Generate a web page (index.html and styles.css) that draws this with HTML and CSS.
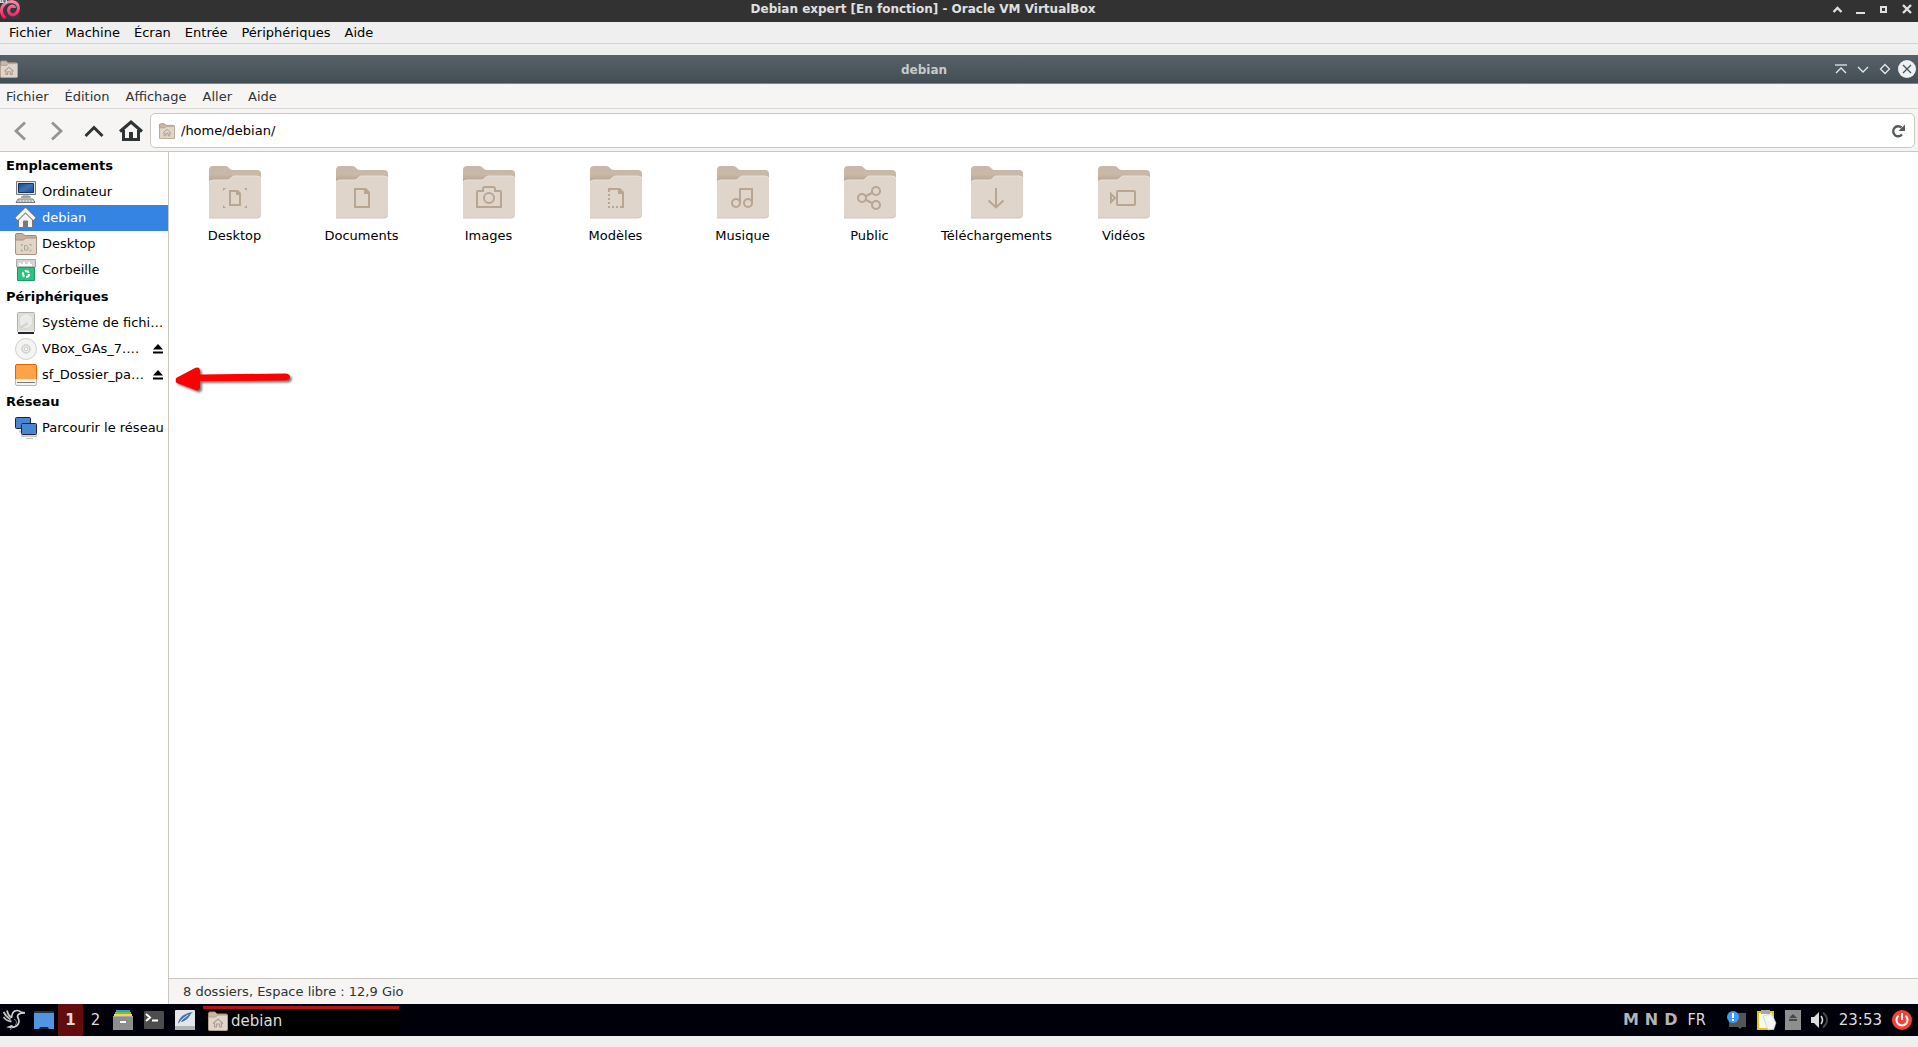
FILE: index.html
```html
<!DOCTYPE html>
<html lang="fr">
<head>
<meta charset="utf-8">
<title>Debian expert [En fonction] - Oracle VM VirtualBox</title>
<link rel="stylesheet" href="styles.css">
</head>
<body>
<svg class="defs" aria-hidden="true">
  <defs>
    <linearGradient id="backshade" x1="0" y1="0" x2="0" y2="1">
      <stop offset="0" stop-color="#c9b7a7"/><stop offset=".16" stop-color="#c9b7a7"/><stop offset=".28" stop-color="#b9a593"/>
    </linearGradient>
    <linearGradient id="swirl" x1="0" y1="0" x2="0" y2="1">
      <stop offset="0" stop-color="#f58ba0"/><stop offset="1" stop-color="#ff0f57"/>
    </linearGradient>
    <linearGradient id="screen" x1="0" y1="0" x2="1" y2="1">
      <stop offset="0" stop-color="#174a8c"/><stop offset=".5" stop-color="#3d74b8"/><stop offset="1" stop-color="#1a4b8f"/>
    </linearGradient>
    <symbol id="folder" viewBox="0 0 52 53">
      <path d="M0 53V4q0-4 4-4h12q2 0 3 1l2 2q1 1 3 1h24q4 0 4 4v40H0z" fill="url(#backshade)"/>
      <path d="M0 52V18q0-4 4-4h14q2 0 3-1l2-2q1-1 3-1h22q4 0 4 4v34q0 4-4 4z" fill="#dfd5cb"/>
      <path d="M0 17q0-3 4-3h14q2 0 3-1l2-2q1-1 3-1h22q4 0 4 3" fill="none" stroke="#e9e1d9"/>
      <path d="M0 52h48q3 0 4-3" fill="none" stroke="#cdc5bd"/>
    </symbol>
    <symbol id="homefolder" viewBox="0 0 20 20">
      <path d="M.5 19V2.500q0-1.500 1.500-1.500h5l2 2h9q1.500 0 1.500 1.500V19z" fill="#c9b7a7" stroke="#a4907e"/>
      <path d="M.5 7q0-1 1-1h6l2-2h9q1 0 1 1v13q0 1.500-1.500 1.500h-16Q.5 19.500.5 18z" fill="#dfd5cb" stroke="#b39f8d"/>
      <path d="M5 12.500l5-4.500 5 4.500M6.500 12v4h2v-3h3v3h2v-4" fill="none" stroke="#b39f8d" stroke-width="1.200"/>
    </symbol>
    <symbol id="eject" viewBox="0 0 10 10"><path d="M5 0L10 5.500H0zM0 7.500h10v2H0z" fill="#000"/></symbol>
  </defs>
</svg>

<header class="host-title">
  <svg class="host-logo" viewBox="0 0 20 20"><path d="M1 0h19v19H1z" fill="#343842"/><path d="M5.500 18Q0 14 2 7.500 5 1.500 12 1.500q6.500 1 6.500 7-1 6-6 6.500-4-1-4-5 .5-3.500 4-4 2 .5 2 2" fill="none" stroke="url(#swirl)" stroke-width="3"/><path d="M0 0h7v3H0z" fill="#d3d5dc"/><path d="M1 1h1M3 1h3M4 2h1" stroke="#333"/></svg>
  <h1 class="title-text">Debian expert [En fonction] - Oracle VM VirtualBox</h1>
  <div class="title-buttons">
    <button class="host-button" aria-label="Enrouler"><svg width="11" height="9"><path d="M1.500 7l4-4 4 4" fill="none" stroke="#e0e0e0" stroke-width="2.400"/></svg></button>
    <button class="host-button" aria-label="Réduire"><svg width="11" height="9"><path d="M1 7h9v2H1z" fill="#e0e0e0"/></svg></button>
    <button class="host-button" aria-label="Agrandir"><svg width="9" height="9"><path d="M2 2h5v5H2z" fill="none" stroke="#e0e0e0" stroke-width="2"/></svg></button>
    <button class="host-button" aria-label="Fermer"><svg width="10" height="10"><path d="M1 1l8 8M9 1L1 9" stroke="#e0e0e0" stroke-width="2.400"/></svg></button>
  </div>
</header>
<nav class="host-menu">
  <button class="menu-item">Fichier</button><button class="menu-item">Machine</button><button class="menu-item">Écran</button><button class="menu-item">Entrée</button><button class="menu-item">Périphériques</button><button class="menu-item">Aide</button>
</nav>

<main class="guest">
  <header class="guest-title">
    <svg class="guest-icon" viewBox="0 0 20 20"><use href="#homefolder"/></svg>
    <h2 class="title-text">debian</h2>
    <div class="title-buttons">
      <button class="guest-button" aria-label="Enrouler"><svg width="12" height="12"><path d="M0 2h12" stroke="#aeb4b8" stroke-width="2"/><path d="M1 10l5-5 5 5" fill="none" stroke="#e5e8ea" stroke-width="1.300"/></svg></button>
      <button class="guest-button" aria-label="Réduire"><svg width="12" height="12"><path d="M1 4l5 5 5-5" fill="none" stroke="#e5e8ea" stroke-width="1.300"/></svg></button>
      <button class="guest-button" aria-label="Agrandir"><svg width="12" height="12"><path d="M6 1.500L10.500 6 6 10.500 1.500 6z" fill="none" stroke="#e5e8ea" stroke-width="1.300"/></svg></button>
      <button class="guest-button" aria-label="Fermer"><svg width="18" height="18"><circle cx="9" cy="9" r="9" fill="#eff0f4"/><path d="M5 5l8 8M13 5l-8 8" stroke="#46525a" stroke-width="1.300"/></svg></button>
    </div>
  </header>
  <nav class="guest-menu">
    <button class="menu-item">Fichier</button><button class="menu-item">Édition</button><button class="menu-item">Affichage</button><button class="menu-item">Aller</button><button class="menu-item">Aide</button>
  </nav>
  <form class="toolbar">
    <button type="button" class="tool" aria-label="Précédent" disabled><svg width="14" height="20"><path d="M12 1.500L3 10l9 8.500" fill="none" stroke="#929595" stroke-width="2.800"/></svg></button>
    <button type="button" class="tool" aria-label="Suivant" disabled><svg width="14" height="20"><path d="M2 1.500L11 10l-9 8.500" fill="none" stroke="#929595" stroke-width="2.800"/></svg></button>
    <button type="button" class="tool" aria-label="Dossier parent"><svg width="20" height="14"><path d="M1.500 12L10 3.500l8.500 8.500" fill="none" stroke="#2e3436" stroke-width="3"/></svg></button>
    <button type="button" class="tool" aria-label="Dossier personnel"><svg width="24" height="22"><path d="M1 11.500L12 2l11 9.500" fill="none" stroke="#2e3436" stroke-width="3"/><path d="M4.500 10v9.500h15V10" fill="none" stroke="#2e3436" stroke-width="3"/><path d="M10 12h4v8h-4z" fill="#2e3436"/></svg></button>
    <div class="path">
      <svg class="path-icon" viewBox="0 0 20 20"><use href="#homefolder"/></svg>
      <input class="path-input" type="text" value="/home/debian/" aria-label="Emplacement">
      <button type="button" class="refresh" aria-label="Actualiser"><svg width="14" height="14"><path d="M11 10.500A5 5 0 1 1 10.500 3.500" fill="none" stroke="#555b5a" stroke-width="2.400"/><path d="M14 .5V7H7.500z" fill="#555b5a"/></svg></button>
    </div>
  </form>
  <div class="panes">
    <aside class="sidebar">
      <h3 class="side-head">Emplacements</h3>
      <ul class="places">
        <li><a href="#" class="place"><svg class="place-icon" viewBox="0 0 22 22"><path d="M1.500.5h19v13h-19z" fill="#e3e3dd" stroke="#777b74"/><path d="M3.500 2.500h15v9h-15z" fill="url(#screen)" stroke="#173560"/><path d="M8 14h6l1 2.500H7z" fill="#c6c8c4"/><path d="M6 16h10" stroke="#6a6d68"/><path d="M3 18h15l2 3.500H1z" fill="#dcdcd8" stroke="#777b74"/><path d="M3 20h15" stroke="#999" stroke-dasharray="2 1"/></svg>Ordinateur</a></li>
        <li><a href="#" class="place selected"><svg class="place-icon" viewBox="0 0 22 22"><path d="M3.500 10v10.500h5V14h4v6.500h5V10L11 4z" fill="#f5f5f3" stroke="#777b78"/><path d="M8.500 14.500h4V20h-4z" fill="#777b78"/><path d="M1 12.500l9.500-9.500 9.500 9.500" fill="none" stroke="#6c706c" stroke-width="5"/><path d="M1.500 12l9-9 9 9" fill="none" stroke="#f4f4f2" stroke-width="3.200"/></svg>debian</a></li>
        <li><a href="#" class="place"><svg class="place-icon" viewBox="0 0 22 22"><path d="M.5 20V2Q.5.5 2 .5h5.500l2.500 2h10q1.500 0 1.500 1.500v16z" fill="#c4b09e" stroke="#9f8a78"/><path d="M.5 8q0-1 1-1h7l2-2h10q1 0 1 1v14q0 1.500-1.500 1.500H2Q.5 21.500.5 20z" fill="#dfd5cb" stroke="#a89482"/><path d="M9.500 12.500h2l1.500 1.500v3H9.500zM6.500 13v-1.500H8M14.500 11.500H16V13M6.500 16.500V18H8M16 16.500V18h-1.500" fill="none" stroke="#b39f8d"/></svg>Desktop</a></li>
        <li><a href="#" class="place"><svg class="place-icon" viewBox="0 0 22 22"><path d="M1.500.5h19V8h-19z" fill="#d4d4d2" stroke="#aaa"/><path d="M4 7V4h2v1h2V3h2v2h3V3h2v2h2v2z" fill="#fff"/><path d="M2.500 8.500h17v13h-17z" fill="#2ec27e" stroke="#1c9b61"/><circle cx="11" cy="15" r="3" fill="none" stroke="#fff" stroke-width="2" stroke-dasharray="4.600 1.700"/></svg>Corbeille</a></li>
      </ul>
      <h3 class="side-head">Périphériques</h3>
      <ul class="places">
        <li><a href="#" class="place"><svg class="place-icon" viewBox="0 0 22 22"><path d="M2.500 1.500q0-1 1-1h15q1 0 1 1v18h-17z" fill="#dededa" stroke="#b1b1ae"/><path d="M3 20h16v2H3z" fill="#26262e"/><path d="M3 19.500h16" stroke="#eee"/><ellipse cx="11" cy="9" rx="7" ry="7.500" fill="#ebebe8" stroke="#d6d6d2"/><path d="M5 16l6-4" stroke="#d0d0ca" stroke-width="2"/><circle cx="11.500" cy="12" r="1.800" fill="#d8d8d3"/></svg>Système de fichi…</a></li>
        <li><a href="#" class="place"><svg class="place-icon" viewBox="0 0 22 22"><circle cx="11" cy="11" r="10.500" fill="#f4f4f3" stroke="#cfcfcd"/><circle cx="11" cy="11" r="4" fill="#ececea" stroke="#cfcfcf" stroke-width="1.500"/><circle cx="11" cy="11" r="1.700" fill="#fff" stroke="#ccc"/></svg><span class="place-name">VBox_GAs_7.…</span><svg class="eject" viewBox="0 0 10 10"><use href="#eject"/></svg></a></li>
        <li><a href="#" class="place"><svg class="place-icon" viewBox="0 0 22 22"><path d="M.5 14h21v6q0 1.500-1.500 1.500H2Q.5 21.500.5 20z" fill="#f4f3f1" stroke="#b9b5b1"/><path d="M.5 15V2Q.5.5 2 .5h18q1.500 0 1.500 1.500v13z" fill="#ffa348"/><path d="M.5 15V2Q.5.5 2 .5h18q1.500 0 1.500 1.500v13" fill="none" stroke="#e66100"/><path d="M2 18.500h18" stroke="#7c7977"/></svg><span class="place-name">sf_Dossier_pa…</span><svg class="eject" viewBox="0 0 10 10"><use href="#eject"/></svg></a></li>
      </ul>
      <h3 class="side-head">Réseau</h3>
      <ul class="places">
        <li><a href="#" class="place"><svg class="place-icon" viewBox="0 0 22 22"><path d="M4 14.500h6" stroke="#c7c7c7" stroke-width="2"/><rect x=".5" y=".5" width="15" height="11" rx="1" fill="#4a86cf" stroke="#22223a"/><path d="M6.500 18h15v1.500h-15zM11 21.500h7" stroke="#c4c4c4" fill="#eee"/><rect x="6.500" y="6.500" width="15" height="11" rx="1" fill="#4a86cf" stroke="#22223a"/></svg>Parcourir le réseau</a></li>
      </ul>
      <svg class="pointer" viewBox="0 0 122 30"><path d="M2 14.500Q1 13 3 11.500L20 2.500Q25 0 26 4V8.500L112 7.500Q116 8 116 11T112 14.500L26 15V22Q25 26 20 23.500L3 17Q1 16 2 14.500z" fill="#f00"/></svg>
    </aside>
    <section class="content">
      <ul class="files">
        <li><a href="#" class="file"><svg class="file-icon" viewBox="0 0 52 53"><use href="#folder"/><path d="M21 25h7l3 3v11H21z" fill="none" stroke="#b8a592" stroke-width="2"/><path d="M27 24h2l3 3v2h-5z" fill="#b8a592"/><path d="M14 22h3l-3 3zM38 22h-3l3 3zM14 42h3l-3-3zM38 42h-3l3-3z" fill="#b8a592"/></svg>Desktop</a></li>
        <li><a href="#" class="file"><svg class="file-icon" viewBox="0 0 52 53"><use href="#folder"/><path d="M19 23h10l4 4v14H19z" fill="none" stroke="#b8a592" stroke-width="2"/><path d="M28 22h2l4 4v2h-6z" fill="#b8a592"/></svg>Documents</a></li>
        <li><a href="#" class="file"><svg class="file-icon" viewBox="0 0 52 53"><use href="#folder"/><path d="M14 41V26q0-1 1-1h5v-2q0-2 2-2h8q2 0 2 2v2h5q1 0 1 1v15z" fill="none" stroke="#b8a592" stroke-width="2"/><circle cx="26" cy="32" r="5" fill="none" stroke="#b8a592" stroke-width="2"/></svg>Images</a></li>
        <li><a href="#" class="file"><svg class="file-icon" viewBox="0 0 52 53"><use href="#folder"/><path d="M18 23h11l4 4v15" fill="none" stroke="#b8a592" stroke-width="2"/><path d="M28 22h2l4 4v2h-6z" fill="#b8a592"/><path d="M19 24v18M18 41h16" fill="none" stroke="#b8a592" stroke-width="2" stroke-dasharray="2 2"/></svg>Modèles</a></li>
        <li><a href="#" class="file"><svg class="file-icon" viewBox="0 0 52 53"><use href="#folder"/><path d="M23 37V23h12v14" fill="none" stroke="#b8a592" stroke-width="2"/><circle cx="19" cy="37" r="4" fill="none" stroke="#b8a592" stroke-width="2"/><circle cx="31" cy="37" r="4" fill="none" stroke="#b8a592" stroke-width="2"/></svg>Musique</a></li>
        <li><a href="#" class="file"><svg class="file-icon" viewBox="0 0 52 53"><use href="#folder"/><path d="M22 30l6-3M22 34l6 3" stroke="#b8a592" stroke-width="2"/><g fill="none" stroke="#b8a592" stroke-width="2"><circle cx="18" cy="32" r="4"/><circle cx="32" cy="25" r="4"/><circle cx="32" cy="39" r="4"/></g></svg>Public</a></li>
        <li><a href="#" class="file"><svg class="file-icon" viewBox="0 0 52 53"><use href="#folder"/><path d="M25 22v19M17.500 34.500l7.500 7 7.500-7" fill="none" stroke="#b8a592" stroke-width="2"/></svg>Téléchargements</a></li>
        <li><a href="#" class="file"><svg class="file-icon" viewBox="0 0 52 53"><use href="#folder"/><rect x="19" y="25" width="18" height="14" rx="1" fill="none" stroke="#b8a592" stroke-width="2"/><path d="M13 28v8l4-4z" fill="none" stroke="#b8a592" stroke-width="2"/></svg>Vidéos</a></li>
      </ul>
      <footer class="status">8 dossiers, Espace libre : 12,9 Gio</footer>
    </section>
  </div>
</main>

<footer class="taskbar">
  <div class="launchers">
    <button class="launch menu" aria-label="Menu"><svg width="22" height="22"><path d="M.5 3q3 5 7 7.500M4 1.500q1 5 4.500 7M.5 8q3 4 8 4.500" fill="none" stroke="#c4c4c4" stroke-width="1.800"/><path d="M8.500 9Q9 1.500 14 1.500q2.500 0 3.500 1.500l5 1q-5 0-6.500 1-2.500 1.500-.5 5 1.500 4-1.500 6.500-3 2.500-8 1.500l3.500-1.500" fill="none" stroke="#d0d0d0" stroke-width="1.700"/><path d="M11 10q4 2 1.500 6" fill="none" stroke="#888"/><path d="M9 18l-2 3" stroke="#888"/></svg></button>
    <button class="launch desk" aria-label="Afficher le bureau"><svg width="20" height="18"><path d="M0 0h20v18H0z" fill="#5294e2"/><path d="M0 0h20v2H0z" fill="#1e3651"/><path d="M5 18l1-2h8l1 2z" fill="#17283d"/></svg></button>
    <button class="space current">1</button>
    <button class="space">2</button>
    <button class="launch" aria-label="Fichiers"><svg width="20" height="20"><path d="M3 0h14v2H3z" fill="#4a90d9"/><path d="M2 2h16v2H2z" fill="#62c648"/><path d="M1 4h18v2H1z" fill="#ffd23f"/><path d="M0 6h20v14H0z" fill="#8e8e8e"/><path d="M0 6h20v1H0z" fill="#aaa"/><path d="M7 11h6v2H7z" fill="#fff"/></svg></button>
    <button class="launch" aria-label="Terminal"><svg width="20" height="18"><rect width="20" height="18" rx="1" fill="#4d4d4d"/><path d="M2 3l4 3.500L2 10M8 9.500h6" fill="none" stroke="#fff" stroke-width="2"/></svg></button>
    <button class="launch" aria-label="Éditeur"><svg width="20" height="20"><rect width="20" height="20" rx="1" fill="#e3e6e9"/><path d="M0 16h20v4H0z" fill="#b1b4b7"/><path d="M3 14Q4 4 18 2q-3 2-4 5-4 5-9 5z" fill="#4775a8"/><path d="M3 15Q7 8 13 5" fill="none" stroke="#e3e6e9"/></svg></button>
    <button class="task"><svg class="task-icon" viewBox="0 0 20 20"><use href="#homefolder"/></svg>debian</button>
  </div>
  <div class="tray">
    <div class="locks"><span>M</span><span>N</span><span>D</span></div>
    <span class="layout">FR</span>
    <svg class="tray-icon" viewBox="0 0 20 20"><path d="M2 3h17v14h-4l-2 2-2-2H2z" fill="#555"/><circle cx="6" cy="7" r="6" fill="#3f9cf0"/><path d="M5 3h2v5H5zM5 9h2v2H5z" fill="#fff"/></svg>
    <svg class="tray-icon clip" viewBox="0 0 20 22"><path d="M1 3h15v17H1z" fill="#f7f7f3" stroke="#e3c70d" stroke-width="2"/><path d="M4 1h9v4H4z" fill="#a5a8a5"/><path d="M6 7l9-2 4 9-2 6-6 1z" fill="#f5f5f3" stroke="#bbb" stroke-width=".500"/></svg>
    <svg class="tray-icon drive" viewBox="0 0 16 20"><path d="M0 0h16v20H0z" fill="#8e8e8e"/><path d="M8 4l4 4H4zM4 9h8v2H4z" fill="#484848"/></svg>
    <svg class="tray-icon sound" viewBox="0 0 18 18"><path d="M0 6h3l5-5v16l-5-5H0z" fill="#ddd"/><path d="M10 5q3 4 0 8" fill="none" stroke="#ddd" stroke-width="1.600"/><path d="M12 1.500q8 7.500 0 15" fill="none" stroke="#494949" stroke-width="2"/></svg>
    <time class="clock">23:53</time>
    <button class="power" aria-label="Éteindre"><svg width="20" height="20"><circle cx="10" cy="10" r="10" fill="#f44336"/><path d="M6.500 5.700a5.500 5.500 0 1 0 7 0M10 3v7" fill="none" stroke="#fff" stroke-width="2"/></svg></button>
  </div>
</footer>
</body>
</html>
```

FILE: styles.css
```css
* { box-sizing: border-box; }

body {
  margin: 0;
  min-height: 100vh;
  padding-bottom: 11px;
  display: flex;
  flex-direction: column;
  background: #efefef;
  color: #000;
  font: 13px/26px "DejaVu Sans", sans-serif;
}

button {
  padding: 0;
  border: 0;
  background: none;
  color: inherit;
  font: inherit;
}

svg { display: block; flex: none; }
a { color: inherit; text-decoration: none; }
ul { margin: 0; padding: 0; list-style: none; }
.defs { position: absolute; width: 0; height: 0; }

/* Title bars */
.host-title {
  display: flex;
  height: 22px;
  background: #323232;
  color: #e0e0e0;
}
.host-logo { width: 20px; height: 20px; }
.title-text {
  flex: 1;
  margin: 0;
  font-size: 12px;
  font-weight: bold;
  line-height: 18px;
  text-align: center;
}
.title-buttons { display: flex; }
.host-button,
.guest-button {
  display: flex;
  align-items: center;
  justify-content: center;
}
.host-button { width: 23px; height: 18px; }
.guest-button { width: 22px; height: 28px; }

.guest-title {
  display: flex;
  align-items: center;
  height: 29px;
  border-bottom: 1px solid #3f9bd0;
  background: linear-gradient(#56616a, #434e54);
  color: #c8cacb;
}
.guest-icon { width: 18px; height: 18px; }
.guest-title .title-text { padding-top: 2px; line-height: 28px; }

/* Menus */
.host-menu {
  display: flex;
  gap: 14px;
  height: 22px;
  margin-bottom: 11px;
  padding-left: 9px;
  border-bottom: 1px solid #d2d4d2;
  line-height: 21px;
}
.guest-menu {
  display: flex;
  gap: 16px;
  height: 25px;
  padding: 1px 0 0 6px;
  border-bottom: 1px solid #dcdad7;
  color: #2e3436;
  line-height: 24px;
}

/* File manager */
.guest {
  flex: 1;
  display: flex;
  flex-direction: column;
  background: #f6f5f4;
}
.toolbar {
  display: flex;
  height: 43px;
  padding: 4px 3px 3px 1px;
  border-bottom: 1px solid #cdc7c2;
}
.tool {
  display: flex;
  align-items: center;
  justify-content: center;
  width: 37px;
}
.path {
  flex: 1;
  display: flex;
  align-items: center;
  gap: 6px;
  margin-left: 1px;
  padding: 0 9px 0 8px;
  border: 1px solid #cdc7c2;
  border-radius: 5px;
  background: #fff;
}
.path-icon { width: 16px; height: 16px; }
.path-input {
  flex: 1;
  min-width: 0;
  padding: 0;
  border: 0;
  outline: 0;
  background: none;
  color: #000;
  font: inherit;
}
.panes {
  flex: 1;
  display: flex;
  background: #fff;
}
.sidebar {
  position: relative;
  width: 169px;
  border-right: 1px solid #cdc7c2;
}
.side-head {
  margin: 1px 0 0;
  padding-left: 6px;
  font-size: 13px;
  font-weight: bold;
}
.place {
  display: flex;
  align-items: center;
  gap: 5px;
  height: 26px;
  padding: 0 5px 0 15px;
  white-space: nowrap;
}
.selected { background: #3584e4; color: #fff; }
.place-icon { width: 22px; height: 22px; }
.place-name { flex: 1; }
.eject { width: 10px; height: 10px; }
.pointer {
  position: absolute;
  top: 214px;
  left: 174px;
  width: 122px;
  height: 30px;
  overflow: visible;
  filter: drop-shadow(2px 2px 1px #0008);
}
.content {
  flex: 1;
  display: flex;
  flex-direction: column;
}
.files {
  flex: 1;
  display: flex;
  flex-wrap: wrap;
  align-content: flex-start;
  padding: 14px 0 0 2px;
}
.file {
  display: flex;
  flex-direction: column;
  align-items: center;
  gap: 4px;
  width: 127px;
}
.file-icon { width: 52px; height: 53px; }
.status {
  height: 26px;
  padding-left: 14px;
  border-top: 1px solid #cdc7c2;
  background: #f6f5f4;
  color: #2e3436;
}

/* Taskbar */
.taskbar {
  display: flex;
  justify-content: space-between;
  height: 32px;
  background: #00000a;
  color: #ddd;
  font-size: 15px;
  line-height: 32px;
}
.launchers,
.tray { display: flex; align-items: center; }
.launch {
  width: 31px;
  padding-left: 5px;
}
.menu { width: 29px; padding-left: 3px; }
.desk { width: 29px; }
.space { width: 25px; height: 32px; }
.current { background: #630c0e; font-weight: bold; }
.task {
  display: flex;
  align-items: center;
  gap: 3px;
  width: 196px;
  height: 30px;
  margin-left: 2px;
  padding: 0 0 3px 5px;
  border-top: 3px solid #b0151b;
  background: #000;
  line-height: 24px;
  align-self: flex-end;
}
.task-icon { width: 20px; height: 20px; }
.tray { gap: 10px; padding-right: 6px; }
.locks {
  display: flex;
  gap: 6px;
  color: #b4b4b4;
  font-size: 16px;
  font-weight: bold;
}
.layout {
  margin-right: 11px;
  font-family: "DejaVu Sans Condensed", "DejaVu Sans", sans-serif;
  font-size: 16px;
}
.tray-icon { width: 20px; height: 20px; }
.clip { height: 22px; margin-right: -2px; }
.drive { width: 16px; }
.sound { width: 18px; height: 18px; }
```
